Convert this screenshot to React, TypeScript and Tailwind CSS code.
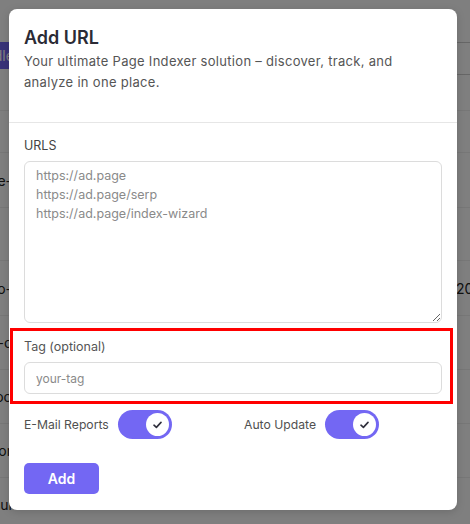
import React from "react";

const rows = [
  { left: "", right: "", h: "h-[42px]" },
  { left: "site-e-", right: "", h: "h-[55px]" },
  { left: "", right: "", h: "h-[53px]" },
  { left: "demo-", right: "2024", h: "h-[55px]" },
  { left: "sub-c", right: "", h: "h-[54px]" },
  { left: "foo", right: "", h: "h-[54px]" },
  { left: "mor", right: "", h: "h-[54px]" },
  { left: "resul", right: "", h: "h-[54px]" },
];

function Toggle({ label }: { label: string }) {
  return (
    <label className="flex items-center gap-[9px]">
      <span className="text-[12.2px] leading-5 text-[#505050]">{label}</span>
      <span className="flex h-[29px] w-[54px] items-center justify-end rounded-full bg-[#7367f3] p-[3px]">
        <span className="flex h-[23px] w-[23px] items-center justify-center rounded-full bg-white">
          <svg width="9" height="8" viewBox="0 0 9 8" fill="none">
            <path d="M1 4.2 3.4 6.4 8 1.4" stroke="#2f2f3b" strokeWidth="1.6" strokeLinecap="round" strokeLinejoin="round" />
          </svg>
        </span>
      </span>
    </label>
  );
}

export default function App() {
  return (
    <div className="relative h-[524px] w-[470px] overflow-hidden bg-white font-['Inter',sans-serif]">
      {/* page behind the dialog */}
      <div className="flex h-[110px] items-start justify-between pt-[42px]">
        <button className="-ml-[44px] h-[27px] rounded-[5px] bg-[#7367f0] pl-3 pr-[4px] text-[14px] text-white">Bundle</button>
        <div className="-mr-[20px] flex h-[33px] w-[60px] items-center justify-end rounded-[5px] border border-[#ccc] pr-[8px] text-[#222]">
          <svg width="8" height="6" viewBox="0 0 8 6"><path d="M0 0h8L4 5z" fill="#222" /></svg>
        </div>
      </div>
      <div className="border-t border-[#eee]">
        {rows.map((r, i) => (
          <div
            key={i}
            className={`flex items-center justify-between border-b border-[#eee] text-[14px] text-[#222] ${r.h}`}
          >
            <span className="-ml-[48px] w-[60px] text-right">{r.left}</span>
            <span className="-mr-[46px] w-[60px] text-left">{r.right}</span>
          </div>
        ))}
      </div>

      {/* backdrop */}
      <div className="absolute inset-0 bg-black/50" />

      {/* dialog */}
      <div className="absolute left-[9px] top-[9px] w-[448px] rounded-[8px] bg-white shadow-[0_2px_8px_rgba(0,0,0,0.15)]">
        <div className="border-b border-[#e6e6e6] px-[15px] pb-[29px] pt-[17px]">
          <h2 className="text-[18px] font-semibold leading-6 text-[#2b2b35]">Add URL</h2>
          <p className="mt-[1px] text-[13px] leading-[21px] tracking-[0.3px] text-[#555]">
            Your ultimate Page Indexer solution – discover, track, and analyze in one place.
          </p>
        </div>

        <div className="px-[15px] pb-[16px] pt-[13px]">
          <div className="text-[12.5px] leading-5 text-[#444]">URLS</div>
          <textarea
            className="mt-[5px] block h-[162px] w-[418px] rounded-[6px] border border-[#dcdcdc] px-[11px] py-[4px] text-[12.5px] leading-[19px] text-[#333] outline-none placeholder:text-[#8a8a8a]"
            placeholder={"https://ad.page\nhttps://ad.page/serp\nhttps://ad.page/index-wizard"}
          />

          <div className="relative mt-[14px]">
            <div className="text-[12.5px] leading-5 text-[#555]">Tag (optional)</div>
            <input
              className="mt-[5px] block h-[32px] w-[418px] rounded-[6px] border border-[#dcdcdc] px-[11px] text-[12px] text-[#333] outline-none placeholder:text-[#8a8a8a]"
              placeholder="your-tag"
            />
            <div className="pointer-events-none absolute -left-[14px] -right-[11px] -top-[9px] -bottom-[10px] border-[3px] border-[#ff0000]" />
          </div>

          <div className="mt-[16px] grid grid-cols-2 gap-x-[22px]">
            <Toggle label="E-Mail Reports" />
            <Toggle label="Auto Update" />
          </div>

          <button className="mt-[24px] h-[31px] w-[75px] rounded-[5px] bg-[#7367f3] text-[14px] font-semibold text-white">
            Add
          </button>
        </div>
      </div>
    </div>
  );
}
